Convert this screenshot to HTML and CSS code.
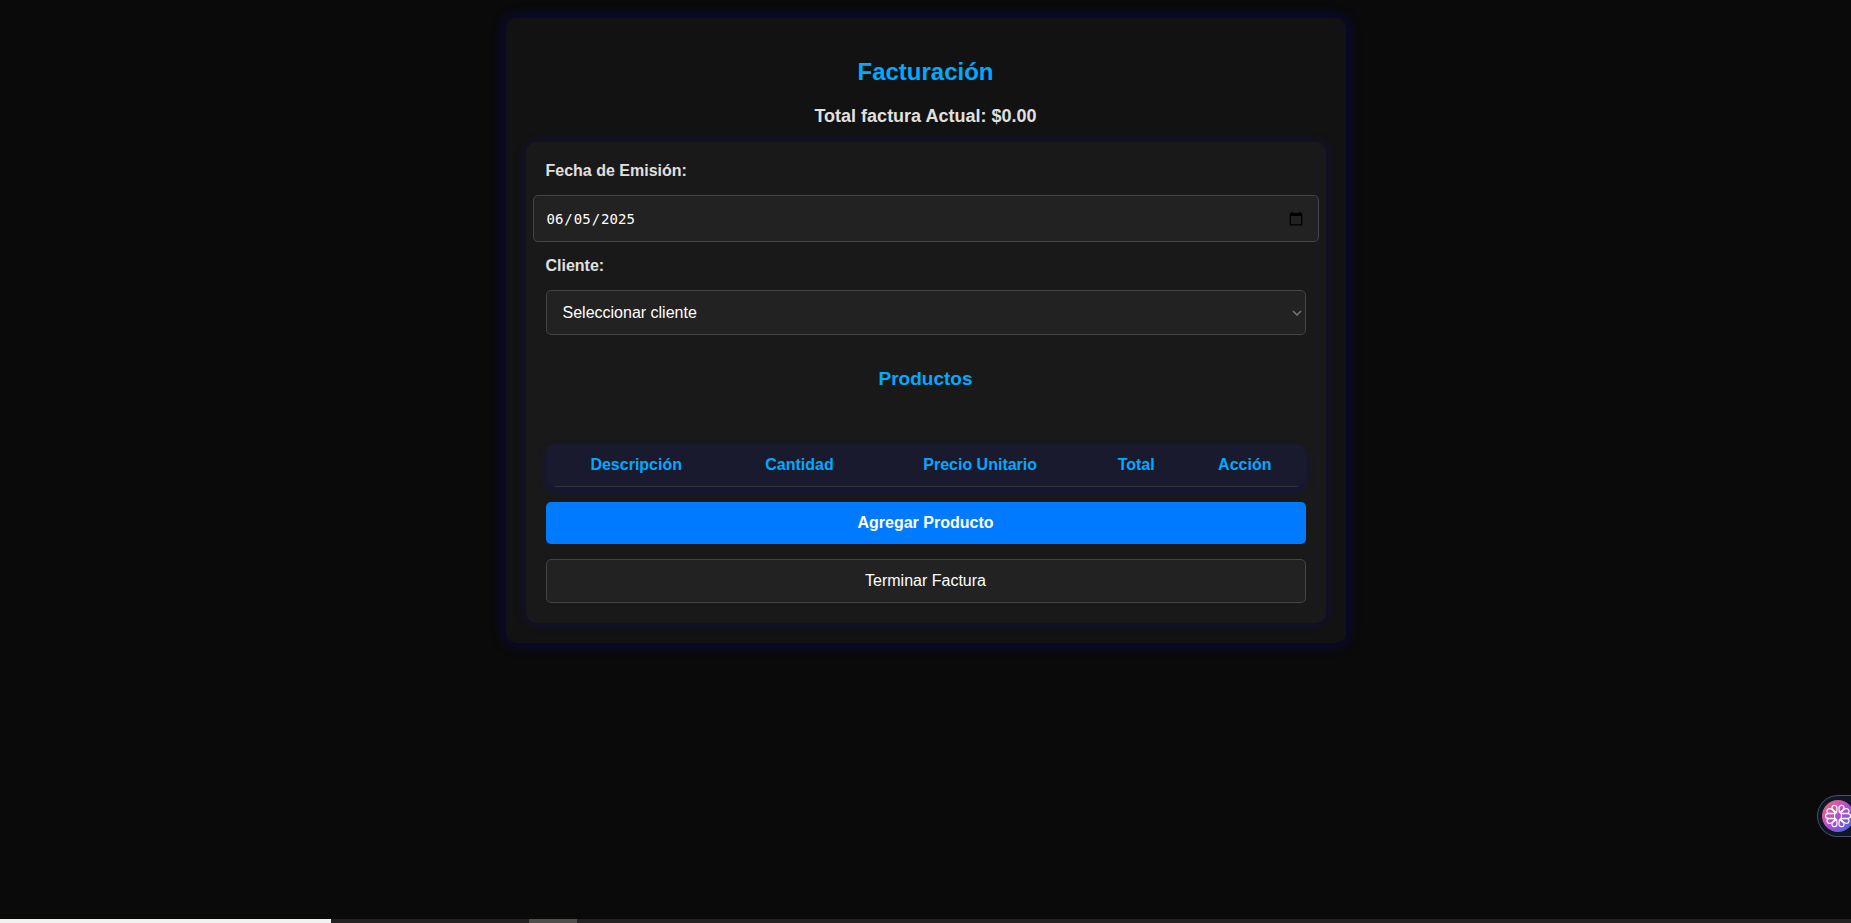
FILE: index.html
```html
<!DOCTYPE html>
<html lang="es">
<head>
<meta charset="utf-8">
<title>Facturación</title>
<link rel="stylesheet" href="styles.css">
</head>
<body>
<main class="container">
  <h2 class="title">Facturación</h2>
  <h3 class="total">Total factura Actual: $0.00</h3>
  <form class="invoice">
    <label class="label" for="fecha">Fecha de Emisión:</label>
    <input class="date" type="date" id="fecha" value="2025-06-05">
    <label class="label" for="cliente">Cliente:</label>
    <div class="client-field">
      <select class="client" id="cliente">
        <option>Seleccionar cliente</option>
      </select>
      <svg class="chevron" viewBox="0 0 10 6" width="10" height="6" aria-hidden="true"><path d="M1 1l4 4 4-4" fill="none" stroke="#767676" stroke-width="1.5"/></svg>
    </div>
    <h3 class="subtitle">Productos</h3>
    <table class="products">
      <thead>
        <tr><th>Descripción</th><th>Cantidad</th><th>Precio Unitario</th><th>Total</th><th>Acción</th></tr>
      </thead>
      <tbody></tbody>
    </table>
    <button class="btn primary" type="button">Agregar Producto</button>
    <button class="btn secondary" type="button">Terminar Factura</button>
  </form>
</main>
<button class="assistant" type="button" aria-label="Asistente">
  <svg viewBox="0 0 32 32" width="32" height="32" aria-hidden="true">
    <defs>
      <linearGradient id="g" x1="0" y1="0" x2="1" y2="1">
        <stop offset="0" stop-color="#f0716e"/>
        <stop offset="0.5" stop-color="#b44bd0"/>
        <stop offset="1" stop-color="#2a6cf5"/>
      </linearGradient>
      <g id="petals">
        <path d="M14.6 12.6 L10.4 9.2 C9.2 6.6 10.8 5.2 12.6 5.3 C14.4 5.4 15.2 7 15 8.6 Z"/>
        <path d="M13.6 13.4 H6.6 C4.2 12.6 4.4 9 7.2 8.6 C8.6 8.5 9.6 9 10.4 9.8 Z"/>
        <path d="M13 13.6 H6.2 C2.6 13.8 2.6 18.2 6.2 18.4 H13 C12.4 17 12.4 15 13 13.6 Z"/>
        <path d="M13.6 18.6 H6.6 C4.2 19.4 4.4 23 7.2 23.4 C8.6 23.5 9.6 23 10.4 22.2 Z"/>
        <path d="M14.6 19.4 L10.4 22.8 C9.2 25.4 10.8 26.8 12.6 26.7 C14.4 26.6 15.2 25 15 23.4 Z"/>
      </g>
    </defs>
    <circle cx="16" cy="16" r="16" fill="url(#g)"/>
    <g fill="none" stroke="#fff" stroke-width="1.2" stroke-linejoin="round">
      <use href="#petals"/>
      <use href="#petals" transform="translate(32 0) scale(-1 1)"/>
    </g>
  </svg>
</button>
<div class="strip"><span class="strip-light"></span><span class="strip-gap"></span><span class="strip-active"></span></div>
</body>
</html>
```
FILE: styles.css
```css
body {
  margin: 0;
  min-height: 100vh;
  overflow: hidden;
  background: #0a0a0a;
  color: #e0e0e0;
  font-family: Arial, "Liberation Sans", sans-serif;
  font-size: 16px;
}

.container {
  box-sizing: border-box;
  max-width: 840px;
  margin: 18px auto 0;
  padding: 20px;
  background: #121212;
  border-radius: 10px;
  box-shadow: 0 0 15px rgba(0, 0, 255, 0.3);
}

.title {
  margin: 20px 0;
  color: #00aaff;
  font-size: 24px;
  line-height: 28px;
  text-align: center;
}

.total {
  margin: 0 0 16px;
  font-size: 18px;
  line-height: 20px;
  text-align: center;
}

.invoice {
  display: flex;
  flex-direction: column;
  padding: 20px;
  background: #191919;
  border-radius: 10px;
  box-shadow: 0 0 12px rgba(0, 0, 255, 0.2);
}

.label {
  font-weight: bold;
  line-height: 18px;
}

.date,
.client {
  box-sizing: border-box;
  border: 1px solid #444;
  border-radius: 5px;
  background: #222;
  color: #fff;
}

.date {
  height: 47px;
  margin: 15px -13px;
  padding: 12px;
  font: 14px "DejaVu Sans Mono", monospace;
}

.date::-webkit-calendar-picker-indicator {
  width: 16px;
  height: 16px;
}

.client-field {
  display: grid;
  align-items: center;
  margin-top: 15px;
}

.client,
.chevron {
  grid-area: 1 / 1;
}

.client {
  appearance: none;
  width: 100%;
  height: 45px;
  padding: 12px 16px;
  font: 16px Arial, "Liberation Sans", sans-serif;
}

.chevron {
  justify-self: end;
  margin-right: 4px;
  pointer-events: none;
}

.subtitle {
  margin: 34px 0 55px;
  color: #00aaff;
  font-size: 19px;
  line-height: 20px;
  text-align: center;
}

.products {
  width: 100%;
  margin-bottom: 15px;
  border-collapse: collapse;
  background: #1a1a2e;
  border-radius: 10px;
  overflow: hidden;
  box-shadow: 0 4px 10px rgba(0, 0, 255, 0.2);
}

.products th {
  padding: 12px;
  border-bottom: 1px solid #333;
  color: #00aaff;
  line-height: 18px;
}

.btn {
  padding: 12px;
  border-radius: 5px;
  color: #fff;
  font: 16px/18px Arial, "Liberation Sans", sans-serif;
}

.primary {
  margin-bottom: 15px;
  border: 0;
  background: #007bff;
  font-weight: bold;
}

.secondary {
  border: 1px solid #444;
  background: #222;
}

.assistant {
  position: fixed;
  right: 0;
  top: 795px;
  display: flex;
  align-items: center;
  width: 34px;
  height: 42px;
  padding: 0 0 0 4px;
  overflow: hidden;
  border: 1px solid #475069;
  border-right: 0;
  border-radius: 21px 0 0 21px;
  background: #0f1624;
}

.assistant svg {
  flex: none;
}

.strip {
  position: fixed;
  left: 0;
  right: 0;
  bottom: 0;
  display: flex;
  height: 4px;
  background: #262223;
}

.strip-light {
  width: 331px;
  background: #f2f2f0;
}

.strip-gap {
  width: 198px;
}

.strip-active {
  width: 48px;
  background: #504c4b;
}
```
